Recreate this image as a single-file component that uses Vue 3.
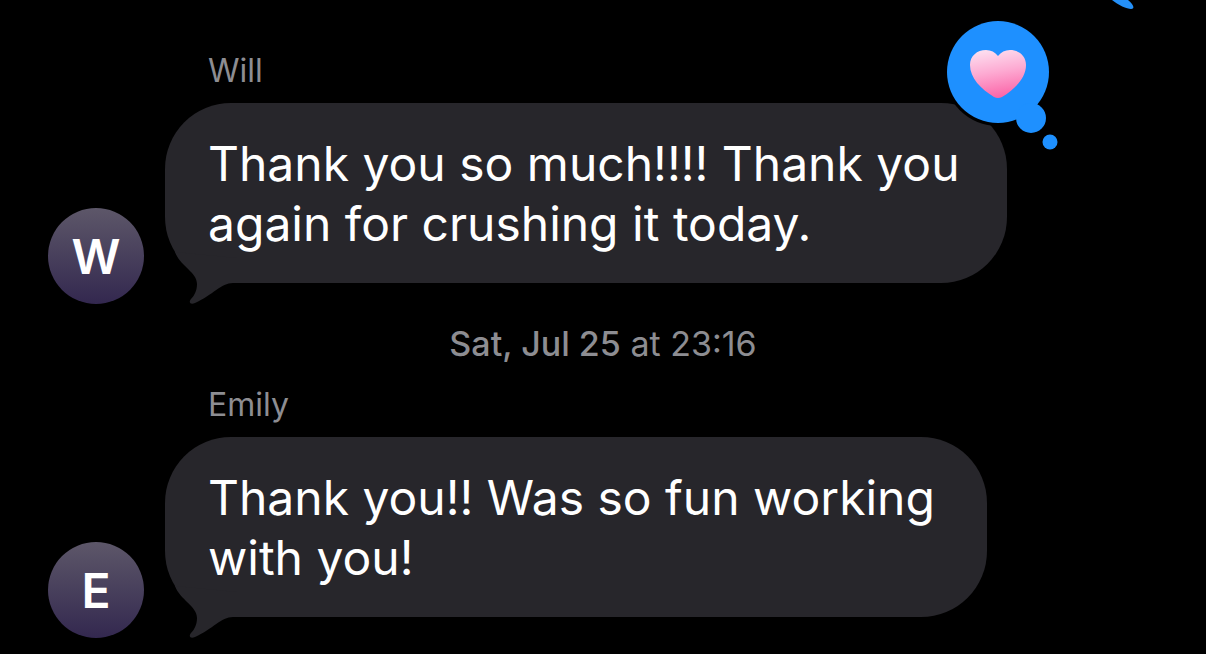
<template>
  <main class="thread">
    <svg class="sent-tail" viewBox="0 0 28 12" aria-hidden="true">
      <path d="M2 0C8 5 17 9 21 9C25 9 24 5 18 0Z" fill="#2490f8" />
    </svg>

    <template v-for="message in messages" :key="message.name">
      <p v-if="message.day" class="timestamp">
        <strong>{{ message.day }}</strong> at {{ message.time }}
      </p>

      <article class="message">
        <h2 class="sender">{{ message.name }}</h2>
        <div class="row">
          <div class="avatar">{{ message.name[0] }}</div>
          <div class="bubble" :class="{ loved: message.loved }">
            <p class="text">{{ message.text }}</p>

            <svg class="tail" viewBox="0 0 64 54" aria-hidden="true">
              <path
                d="M2 2C7 16 24 22 24 34C24 41 21 46 18 49C15 53 18 55 22 53C40 45 48 33 60 33L64 33V8Z"
                fill="#27262b"
              />
            </svg>

            <svg v-if="message.loved" class="reaction" viewBox="0 0 120 140" role="img" aria-label="Loved">
              <defs>
                <linearGradient id="heart-fill" x1="0.4" y1="0" x2="0.6" y2="1">
                  <stop offset="0" stop-color="#fddcee" />
                  <stop offset="0.45" stop-color="#fdaad2" />
                  <stop offset="1" stop-color="#fb62a6" />
                </linearGradient>
              </defs>
              <g fill="#000">
                <circle cx="58" cy="58" r="54" />
                <circle cx="91" cy="104" r="18" />
              </g>
              <g fill="#1e90ff">
                <circle cx="58" cy="58" r="51" />
                <circle cx="91" cy="104" r="15" />
                <circle cx="110" cy="128" r="7.5" />
              </g>
              <path
                d="M58 42C55 38 51 36 46 36C37 36 30 42 30 51C30 64 41 75 54 83Q58 85 62 83C75 75 86 64 86 51C86 42 79 36 70 36C65 36 61 38 58 42Z"
                fill="url(#heart-fill)"
              />
            </svg>
          </div>
        </div>
      </article>
    </template>
  </main>
</template>

<script setup>
const messages = [
  {
    name: "Will",
    text: "Thank you so much!!!! Thank you\nagain for crushing it today.",
    loved: true
  },
  {
    name: "Emily",
    day: "Sat, Jul 25",
    time: "23:16",
    text: "Thank you!! Was so fun working\nwith you!"
  }
];
</script>

<style>
body {
  background-color: #000;
}
</style>

<style scoped>
.thread {
  position: relative;
  box-sizing: border-box;
  min-height: 100vh;
  padding: 51px 48px 16px;
  overflow: hidden;
  background-color: #000;
  color: #8d8d92;
  font-family: Inter, "Liberation Sans", sans-serif;
}

.sent-tail {
  position: absolute;
  top: 0;
  right: 68px;
  width: 28px;
  height: 12px;
}

.sender {
  margin: 0 0 12px 160px;
  font-size: 32px;
  font-weight: 400;
  line-height: 40px;
}

.row {
  display: flex;
  align-items: flex-end;
  gap: 21px;
}

.avatar {
  flex: none;
  width: 96px;
  height: 96px;
  border-radius: 50%;
  background: linear-gradient(#5d5769, #33284f);
  color: #fff;
  font-size: 48px;
  font-weight: 600;
  line-height: 98px;
  text-align: center;
}

.bubble {
  position: relative;
  margin-bottom: 21px;
  padding: 31px 52px 29px 43px;
  border-radius: 66px;
  background-color: #27262b;
}

.bubble.loved {
  padding-right: 47px;
}

.text {
  margin: 0;
  color: #fff;
  font-size: 48px;
  line-height: 60px;
  white-space: pre-line;
}

.tail {
  position: absolute;
  left: 8px;
  bottom: -21px;
  width: 64px;
  height: 54px;
}

.reaction {
  position: absolute;
  top: -89px;
  right: -53px;
  width: 120px;
  height: 140px;
}

.timestamp {
  margin: 20px 0 21px;
  font-size: 34px;
  line-height: 40px;
  text-align: center;
}

.timestamp strong {
  font-weight: 500;
}
</style>
